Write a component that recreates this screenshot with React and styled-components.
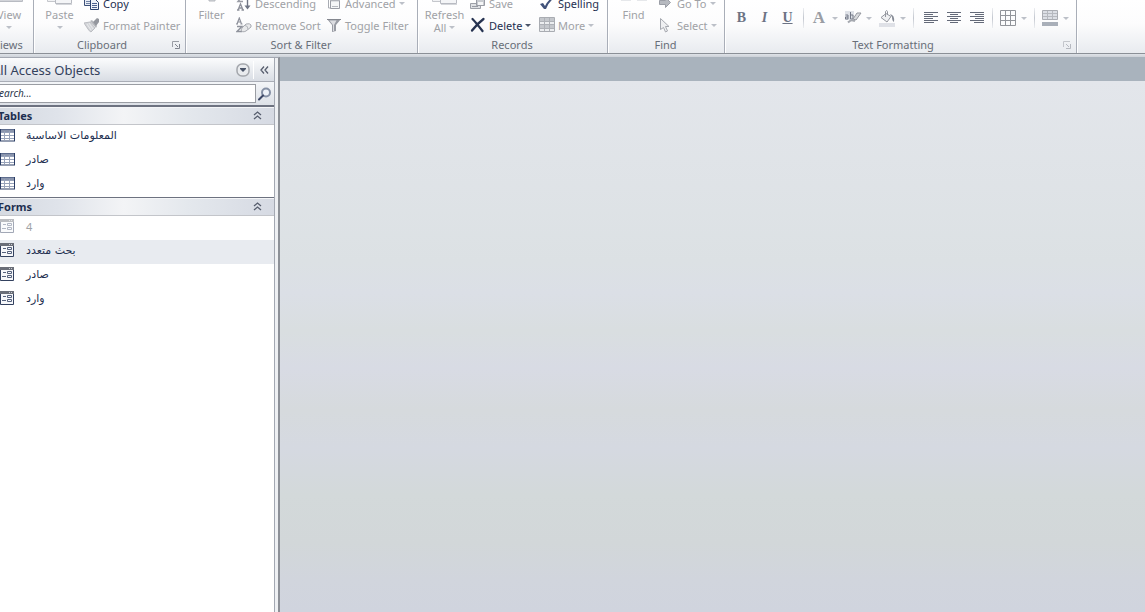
import React from "react";
import styled, { createGlobalStyle, css } from "styled-components";

const C = {
  ink: "#1e2f50",
  off: "#a0a2a6",
  label: "#686e78",
  line: "#8b9097",
};

const GlobalStyle = createGlobalStyle`
  * { box-sizing: border-box; }
  html, body, #root { height: 100%; }
  body {
    margin: 0;
    overflow: hidden;
    font-family: "Noto Sans", "DejaVu Sans", sans-serif;
    font-size: 11px;
    color: ${C.ink};
    background: #fff;
  }
  button, input { font: inherit; color: inherit; }
  svg { display: block; flex: none; }
`;

const Viewport = styled.div`
  height: 100vh;
  overflow: hidden;
`;

const Window = styled.div`
  display: flex;
  flex-direction: column;
  height: 100%;
  margin-left: -15px;
`;

const Ribbon = styled.header`
  display: flex;
  flex: none;
  height: 54px;
  overflow: hidden;
  background: linear-gradient(#ffffff, #fcfcfd 45%, #e8ebef);
  border-bottom: 1px solid ${C.line};
`;

const Group = styled.section`
  display: flex;
  flex-direction: column;
  flex: none;
  justify-content: flex-end;
  width: ${(p) => p.$width}px;
  border-right: 1px solid #fff;
  box-shadow: inset -1px 0 #a9aeb8;
`;

const GroupBody = styled.div`
  display: grid;
  grid-template-columns: ${(p) => p.$cols};
  align-items: end;
  align-content: end;
  height: 36px;
`;

const GroupFooter = styled.div`
  display: flex;
  align-items: center;
  height: 17px;
  padding-right: 3px;
`;

const GroupLabel = styled.h2`
  flex: 1;
  margin: 0;
  font-size: 11px;
  font-weight: 400;
  line-height: 16px;
  text-align: center;
  color: ${C.label};
`;

const buttonReset = css`
  padding: 0;
  border: 0;
  background: none;
  white-space: nowrap;
  color: ${(p) => (p.$active ? C.ink : C.off)};
`;

const Launcher = styled.button`
  ${buttonReset}
  display: grid;
  place-items: center;
  width: 14px;
  height: 14px;
  opacity: ${(p) => (p.$dim ? 0.5 : 1)};
`;

const BigButton = styled.button`
  ${buttonReset}
  display: flex;
  flex-direction: column;
  align-items: center;
  line-height: 12px;
  padding-bottom: 2px;
`;

const BigLine = styled.span`
  display: flex;
  align-items: center;
  justify-content: center;
  gap: 3px;
  height: 13px;
`;

const SmallColumn = styled.div`
  display: flex;
  flex-direction: column;
`;

const SmallButton = styled.button`
  ${buttonReset}
  display: flex;
  align-items: center;
  gap: 3px;
  height: 22px;
`;

const Arrow = styled.span`
  width: 0;
  height: 0;
  border: 3px solid transparent;
  border-top-color: ${(p) => (p.$active ? "#4a5468" : "#bcc0c8")};
  border-bottom: 0;
`;

const FormatBar = styled.div`
  display: flex;
  align-items: center;
  height: 22px;
  margin: 0 0 7px 4px;
`;

const Tool = styled.button`
  ${buttonReset}
  display: grid;
  place-items: center;
  width: 23px;
  height: 22px;
`;

const LetterTool = styled(Tool)`
  font-family: "Liberation Serif", serif;
  font-size: 14px;
  font-weight: 700;
  color: #6c7384;
  font-style: ${(p) => (p.$italic ? "italic" : "normal")};
  text-decoration: ${(p) => (p.$underline ? "underline" : "none")};
`;

const SplitTool = styled.button`
  ${buttonReset}
  display: grid;
  grid-template-columns: 20px 12px;
  place-items: center;
  height: 22px;
  & + & { margin-left: 2px; }
`;

const FontColor = styled.span`
  font-family: "Liberation Serif", serif;
  font-size: 17px;
  font-weight: 700;
  line-height: 20px;
  color: #9a9da4;
`;

const Separator = styled.span`
  width: 1px;
  height: 20px;
  margin: 0 5px 0 4px;
  background: linear-gradient(#eceef1, #c3c7cf 50%, #eceef1);
`;

const Gutter = styled.div`
  flex: none;
  height: 3px;
  background: linear-gradient(#dfe3e8, #ccd1d8);
`;

const Main = styled.div`
  display: flex;
  flex: 1;
  min-height: 0;
`;

const Pane = styled.nav`
  display: flex;
  flex-direction: column;
  flex: none;
  width: 290px;
  background: #fff;
  border-top: 1px solid #a3a8b2;
  border-right: 1px solid #a3a8b2;
`;

const Splitter = styled.div`
  flex: none;
  width: 5px;
  background: #eef0f3;
  border-top: 1px solid #a3a8b2;
  border-right: 2px solid #8c9097;
`;

const PaneHeader = styled.div`
  display: flex;
  align-items: center;
  height: 24px;
  padding: 0 1px 0 7px;
  background: linear-gradient(#fbfcfd, #d9dde4);
  border-bottom: 1px solid #a9adb6;
`;

const PaneTitle = styled.h1`
  flex: 1;
  margin: 0;
  font-size: 13px;
  font-weight: 400;
  line-height: 22px;
  color: #33415c;
`;

const PaneButton = styled.button`
  ${buttonReset}
  display: grid;
  place-items: center;
  width: 18px;
  height: 18px;
`;

const PaneRule = styled.span`
  width: 1px;
  height: 18px;
  margin: 0 1px;
  background: #fff;
`;

const SearchBar = styled.form`
  display: flex;
  align-items: center;
  height: 23px;
  background: linear-gradient(#f3f5f8, #dde1e7);
`;

const SearchInput = styled.input`
  flex: 1;
  min-width: 0;
  height: 19px;
  padding: 0 8px 2px;
  border: 1px solid #9a9da3;
  background: #fff;
  font-size: 10px;
  font-style: italic;
  &::placeholder { color: #2c354a; opacity: 1; }
`;

const Section = styled.section`
  border-top: 2px solid #6d7280;
  & + & { border-top-width: 1px; }
`;

const SectionHeader = styled.h2`
  display: flex;
  align-items: center;
  justify-content: space-between;
  height: 18px;
  margin: 0;
  padding: 0 12px 1px 13px;
  font-size: 11px;
  font-weight: 700;
  line-height: 14px;
  background: linear-gradient(90deg, #d3d8df, #dfe3ea 25%, #f3f4f6 48%, #e4e8ed 70%, #d6dae3);
  border-top: 1px solid #f4f5f7;
  border-bottom: 1px solid #c3c5ca;
`;

const List = styled.ul`
  margin: 0;
  padding: 0;
  list-style: none;
`;

const Item = styled.li`
  display: flex;
  gap: 11px;
  height: 24px;
  padding: 3px 8px 0 15px;
  line-height: 15px;
  color: ${(p) => (p.$dim ? C.off : C.ink)};
  background: ${(p) => (p.$hover ? "#e8ebf0" : "#fff")};
  svg { opacity: ${(p) => (p.$dim ? 0.45 : 1)}; }
`;

const ItemName = styled.span`
  font-family: ${(p) => (p.$latin ? '"Noto Sans"' : '"DejaVu Sans"')}, sans-serif;
  font-size: 11px;
`;

const Workspace = styled.main`
  flex: 1;
  border-top: 24px solid #a9b3bd;
  background: linear-gradient(
    #e3e6eb, #dce1e4 34%, #dbdfe6 40%, #d9dee0 47%, #d8dbe4 54%,
    #d6dadd 62%, #d5d9e1 69%, #d3d9da 78%, #d2d7d9 87%, #d1d5dd 94%, #d0d4de
  );
`;

const Svg = ({ w = 16, h = 16, children }) => (
  <svg width={w} height={h} viewBox={`0 0 ${w} ${h}`} fill="none" aria-hidden="true">{children}</svg>
);

const SheetIcon = () => (
  <Svg w={26} h={32}>
    <path d="M.5 2.5h17v23H.5z" fill="#f1f2f4" stroke="#c5c7cc" />
    <path d="M8.500 8.500h16v19h-16z" fill="#f4f5f7" stroke="#b8bbc2" />
    <path d="M9 28.500h16" stroke="#d5d7db" />
  </Svg>
);
const FormViewIcon = () => (
  <Svg w={30} h={32}>
    <path d="M1.500 2.500h27v23h-27z" fill="#f1f2f4" stroke="#b8bbc2" />
    <path d="M2 24h26" stroke="#d2d4d9" strokeWidth="2" />
  </Svg>
);
const FunnelBigIcon = () => (
  <Svg w={26} h={32}>
    <path d="M3 2h20l-7 12v11h-6V14z" fill="#d4d6da" stroke="#b5b8be" />
  </Svg>
);
const BinocularsIcon = () => (
  <Svg w={28} h={32}>
    <path d="M1 10h10v15H1zM17 10h10v15H17zM11 13h6v5h-6z" fill="#e6e8eb" />
  </Svg>
);
const CopyIcon = () => (
  <Svg>
    <path d="M.5 1.500h8v9h-8z" fill="#e9eef6" stroke="#3c5078" />
    <path d="M2 6.500h4M2 8.500h4" stroke="#7384a6" />
    <path d="M6.500 4.500h5l3 3v7h-8z" fill="#eef2f9" stroke="#2c426e" />
    <path d="M8 8.500h5M8 10.500h5M8 12.500h5" stroke="#4c6290" />
  </Svg>
);
const BrushIcon = () => (
  <Svg>
    <path d="M0 6l6-1 5 6-4 4q-2-1-3-3-2-3-4-6z" fill="#d3d5d9" stroke="#bbbdc2" />
    <path d="M3 7l4 6M5 6l4 6" stroke="#e9eaec" />
    <path d="M6 4l2-1 5 6-1 2z" fill="#b4b6bb" />
    <path d="M9 5l4-4 2 1v3l-3 4z" fill="#94979e" />
  </Svg>
);
const DescIcon = () => (
  <Svg>
    <path d="M2 1.500h4L2 6.500h5" stroke="#9a9da6" strokeWidth="1.500" />
    <path d="M1 15h2.500M5.500 15H8M2 15l2.500-6L7 15M3 13h3" stroke="#8f929c" strokeWidth="1.300" />
    <path d="M11.500 1v11" stroke="#6f7584" strokeWidth="1.400" />
    <path d="M8.500 10.500h6l-3 4z" fill="#6f7584" />
  </Svg>
);
const RemoveSortIcon = () => (
  <Svg>
    <path d="M0 7h2M4.500 7h2M1 7l2.300-6L5.500 7M2 5h3" stroke="#8f929c" strokeWidth="1.200" />
    <path d="M1 9.500h5l-5 5h5" stroke="#8f929c" strokeWidth="1.400" />
    <path d="M6 11l4-4q4-1 5 1v2l-5 4q-4 2-5-1z" fill="#e8e9eb" stroke="#a8abb1" />
    <path d="M9 8.500q3 0 3 4" stroke="#b4b7bc" />
  </Svg>
);
const AdvancedIcon = () => (
  <Svg>
    <path d="M2 1h8l-3 5v4H5V6z" fill="#c9cbd0" />
    <path d="M2.500 4v9h3" stroke="#a9acb3" />
    <path d="M4.500 5.500h9v8h-9z" fill="#f5f6f7" stroke="#9a9da5" />
    <path d="M5 6h8" stroke="#c6c8cd" />
    <path d="M6.500 11.500h1M8.500 11.500h1M10.500 11.500h1" stroke="#777c87" />
  </Svg>
);
const FunnelIcon = () => (
  <Svg>
    <path d="M1 2h14l-5 6v6l-4 1V8z" fill="#999ca4" />
    <path d="M3.500 3.500h7L8 8v6H7V8z" fill="#dcdde1" />
    <path d="M1 2.500h14" stroke="#84878f" />
  </Svg>
);
const SaveIcon = () => (
  <Svg>
    <path d="M.5 8.500h10v5H.5z" fill="#dfe1e4" stroke="#9da0a7" />
    <path d="M6.500 2.500h8v8h-8z" fill="#c8cbd0" stroke="#999ca4" />
    <path d="M8 7h5v3H8z" fill="#f5f6f7" />
    <path d="M2 11.500h6" stroke="#999ca4" />
  </Svg>
);
const DeleteIcon = () => (
  <Svg>
    <path d="M2.500 2q3 3 10 12M13.500 2Q7 7 2 13.500" stroke="#263351" strokeWidth="2.300" strokeLinecap="round" />
  </Svg>
);
const CheckIcon = () => (
  <Svg>
    <path d="M1 9l3-1 2 3q3-6 7-8l1 1q-5 4-7 10H5z" fill="#41527a" />
  </Svg>
);
const MoreIcon = () => (
  <Svg>
    <path d="M.5.5h15v14H.5z" fill="#eceef0" stroke="#a9acb2" />
    <path d="M1 1h14v3H1zM1 8h14v3H1z" fill="#c4c7cc" />
    <path d="M1 4.500h14M1 7.500h14M1 11.500h14M5.500 1v13M10.500 1v13" stroke="#aeb1b7" />
  </Svg>
);
const GoToIcon = () => (
  <Svg>
    <path d="M1.500 5.500h6v-3l5 5-5 5v-3h-6z" fill="#b6b9bf" stroke="#9b9ea6" />
  </Svg>
);
const CursorIcon = () => (
  <Svg>
    <path d="M2.500 1.500v11l3-2 2 4.500 2-1-2-4.500h3.500z" fill="#eff0f2" stroke="#a6a9b0" />
  </Svg>
);
const HighlightIcon = () => (
  <Svg w={18} h={16}>
    <path d="M1 1h9v9H1z" fill="#dfe2e8" />
    <path d="M1.500 5h2.500v4H1.500V7H4M6.500 2v7H9V5H6.500" stroke="#747a88" />
    <path d="M9 9l4-6h4l-5 7z" fill="#d9dbde" stroke="#94979f" />
    <path d="M4 12.500q3-3 5-2l2 .5" stroke="#a5a8af" strokeWidth="2" />
  </Svg>
);
const BucketIcon = () => (
  <Svg w={18} h={18}>
    <path d="M3 8.500l5-4 5 3-4 5.500z" fill="#eff0f2" stroke="#94979f" />
    <path d="M7.500 8V2.500q1.500-2 2 0V6" stroke="#94979f" />
    <path d="M12 5q5 1 4 8-2-1-2-5z" fill="#858a95" />
    <path d="M1 14h16v4H1z" fill="#dfe1e7" />
  </Svg>
);
const ALIGN = {
  left: "M1 2.500h14M1 4.500h9M1 6.500h14M1 8.500h9M1 10.500h14M1 12.500h10",
  center: "M1 2.500h14M4 4.500h8M1 6.500h14M4 8.500h8M1 10.500h14M4 12.500h8",
  right: "M1 2.500h14M6 4.500h9M1 6.500h14M6 8.500h9M1 10.500h14M5 12.500h10",
};
const AlignIcon = ({ side }) => (
  <Svg><path d={ALIGN[side]} stroke="#646a79" /></Svg>
);
const GridIcon = () => (
  <Svg>
    <path d="M.5.5h15v15H.5zM5.500.5v15M10.500.5v15M.5 5.500h15M.5 10.500h15" stroke="#92959b" />
  </Svg>
);
const RowColorIcon = () => (
  <Svg>
    <path d="M.5.5h15v9H.5z" fill="#dcdfe5" stroke="#aaadb3" />
    <path d="M1 3.500h14M1 6.500h14M5.500 1v8M10.500 1v8" stroke="#b6b9bf" />
    <path d="M0 12h16v4H0z" fill="#a9afb9" />
  </Svg>
);
const LauncherIcon = () => (
  <Svg w={8} h={8}>
    <path d="M.5 6V.5H7" stroke="#9a9da5" />
    <path d="M3 3l3 3M7.500 3v4.500H3" stroke="#80848e" />
  </Svg>
);
const MenuCircleIcon = () => (
  <Svg w={14} h={14}>
    <rect x="1" y="1" width="12" height="12" rx="5" fill="#e9ebee" stroke="#a3a6ac" strokeWidth="1.500" />
    <path d="M4 5h6v1L7 9 4 6z" fill="#4a5468" />
  </Svg>
);
const CollapseIcon = () => (
  <Svg w={9} h={8}>
    <path d="M4 .5L1 4l3 3.500M8 .5L5 4l3 3.500" stroke="#565d6d" strokeWidth="1.300" />
  </Svg>
);
const FoldIcon = () => (
  <Svg w={9} h={9}>
    <path d="M1 4l3.500-3L8 4M1 8l3.500-3L8 8" stroke="#565d6d" strokeWidth="1.300" />
  </Svg>
);
const MagnifierIcon = () => (
  <Svg w={16} h={14}>
    <circle cx="9" cy="5.500" r="4" fill="#eef2f8" stroke="#8590a5" strokeWidth="2" />
    <path d="M6 8.500l-4 4" stroke="#3d4866" strokeWidth="2" strokeLinecap="round" />
  </Svg>
);
const TableIcon = () => (
  <Svg w={15} h={14}>
    <path d="M0 1h15v12H0z" fill="#fff" />
    <path d="M0 1h15v3H0z" fill="#8a95ad" />
    <path d="M0 1.500h15" stroke="#5d6c8d" />
    <path d="M0 4.500h14M0 7.500h14M0 10.500h14M4.500 3v9M9.500 3v9" stroke="#98a3ba" />
    <path d="M.5 1v12M14.500 1v12M0 13h15" stroke="#2b3d65" />
  </Svg>
);
const FormIcon = () => (
  <Svg w={15} h={14}>
    <path d="M0 0h14v14H0z" fill="#f6f7fa" />
    <path d="M0 0h14v3H0z" fill="#6a6e78" />
    <path d="M9 1.500h1M11 1.500h1" stroke="#c9ccd2" />
    <path d="M.5 3v10.500h13V3" stroke="#33415f" />
    <path d="M3 5.500h3M2 9.500h4" stroke="#56627d" />
    <path d="M7.500 4.500h4v2h-4zM7.500 8.500h4v2h-4z" stroke="#56627d" />
  </Svg>
);

const Big = ({ icon, label, second, arrow }) => (
  <BigButton type="button">
    {icon}
    <BigLine>{label}</BigLine>
    <BigLine>{second}{arrow && <Arrow />}</BigLine>
  </BigButton>
);

const Small = ({ icon, label, arrow, active }) => (
  <SmallButton type="button" $active={active}>
    {icon}
    {label}
    {arrow && <Arrow $active={active} />}
  </SmallButton>
);

const RibbonGroup = ({ title, width, cols, launcher, dim, children }) => (
  <Group $width={width}>
    <GroupBody $cols={cols}>{children}</GroupBody>
    <GroupFooter>
      <GroupLabel>{title}</GroupLabel>
      {launcher && (
        <Launcher type="button" aria-label={`${title} options`} $dim={dim}><LauncherIcon /></Launcher>
      )}
    </GroupFooter>
  </Group>
);

const NavSection = ({ title, icon, items }) => (
  <Section>
    <SectionHeader>{title}<FoldIcon /></SectionHeader>
    <List>
      {items.map((it) => (
        <Item key={it.name} $dim={it.dim} $hover={it.hover}>
          {icon}
          <ItemName $latin={it.latin}>{it.name}</ItemName>
        </Item>
      ))}
    </List>
  </Section>
);

const TABLES = [{ name: "المعلومات الاساسية" }, { name: "صادر" }, { name: "وارد" }];
const FORMS = [
  { name: "4", dim: true, latin: true },
  { name: "بحث متعدد", hover: true },
  { name: "صادر" },
  { name: "وارد" },
];

export default function App() {
  return (
    <Viewport>
      <GlobalStyle />
      <Window>
        <Ribbon>
          <RibbonGroup title="Views" width={50} cols="48px">
            <Big icon={<FormViewIcon />} label="View" arrow />
          </RibbonGroup>
          <RibbonGroup title="Clipboard" width={152} cols="49px 1fr" launcher>
            <Big icon={<SheetIcon />} label="Paste" arrow />
            <SmallColumn>
              <Small icon={<CopyIcon />} label="Copy" active />
              <Small icon={<BrushIcon />} label="Format Painter" />
            </SmallColumn>
          </RibbonGroup>
          <RibbonGroup title="Sort & Filter" width={232} cols="49px 90px 1fr">
            <Big icon={<FunnelBigIcon />} label="Filter" />
            <SmallColumn>
              <Small icon={<DescIcon />} label="Descending" />
              <Small icon={<RemoveSortIcon />} label="Remove Sort" />
            </SmallColumn>
            <SmallColumn>
              <Small icon={<AdvancedIcon />} label="Advanced" arrow />
              <Small icon={<FunnelIcon />} label="Toggle Filter" />
            </SmallColumn>
          </RibbonGroup>
          <RibbonGroup title="Records" width={190} cols="51px 69px 1fr">
            <Big icon={<SheetIcon />} label="Refresh" second="All" arrow />
            <SmallColumn>
              <Small icon={<SaveIcon />} label="Save" />
              <Small icon={<DeleteIcon />} label="Delete" arrow active />
            </SmallColumn>
            <SmallColumn>
              <Small icon={<CheckIcon />} label="Spelling" active />
              <Small icon={<MoreIcon />} label="More" arrow />
            </SmallColumn>
          </RibbonGroup>
          <RibbonGroup title="Find" width={117} cols="49px 1fr">
            <Big icon={<BinocularsIcon />} label="Find" />
            <SmallColumn>
              <Small icon={<GoToIcon />} label="Go To" arrow />
              <Small icon={<CursorIcon />} label="Select" arrow />
            </SmallColumn>
          </RibbonGroup>
          <RibbonGroup title="Text Formatting" width={352} cols="1fr" launcher dim>
            <FormatBar>
              <LetterTool type="button">B</LetterTool>
              <LetterTool type="button" $italic>I</LetterTool>
              <LetterTool type="button" $underline>U</LetterTool>
              <Separator />
              <SplitTool type="button"><FontColor>A</FontColor><Arrow /></SplitTool>
              <SplitTool type="button" aria-label="Highlight"><HighlightIcon /><Arrow /></SplitTool>
              <SplitTool type="button" aria-label="Fill"><BucketIcon /><Arrow /></SplitTool>
              <Separator />
              <Tool type="button" aria-label="Align left"><AlignIcon side="left" /></Tool>
              <Tool type="button" aria-label="Center"><AlignIcon side="center" /></Tool>
              <Tool type="button" aria-label="Align right"><AlignIcon side="right" /></Tool>
              <Separator />
              <SplitTool type="button" aria-label="Gridlines"><GridIcon /><Arrow /></SplitTool>
              <Separator />
              <SplitTool type="button" aria-label="Row color"><RowColorIcon /><Arrow /></SplitTool>
            </FormatBar>
          </RibbonGroup>
        </Ribbon>
        <Gutter />
        <Main>
          <Pane>
            <PaneHeader>
              <PaneTitle>All Access Objects</PaneTitle>
              <PaneButton type="button" aria-label="Navigation menu"><MenuCircleIcon /></PaneButton>
              <PaneRule />
              <PaneButton type="button" aria-label="Collapse pane"><CollapseIcon /></PaneButton>
            </PaneHeader>
            <SearchBar>
              <SearchInput type="text" aria-label="Search" placeholder="Search..." />
              <PaneButton type="button" aria-label="Run search"><MagnifierIcon /></PaneButton>
            </SearchBar>
            <NavSection title="Tables" icon={<TableIcon />} items={TABLES} />
            <NavSection title="Forms" icon={<FormIcon />} items={FORMS} />
          </Pane>
          <Splitter />
          <Workspace />
        </Main>
      </Window>
    </Viewport>
  );
}
